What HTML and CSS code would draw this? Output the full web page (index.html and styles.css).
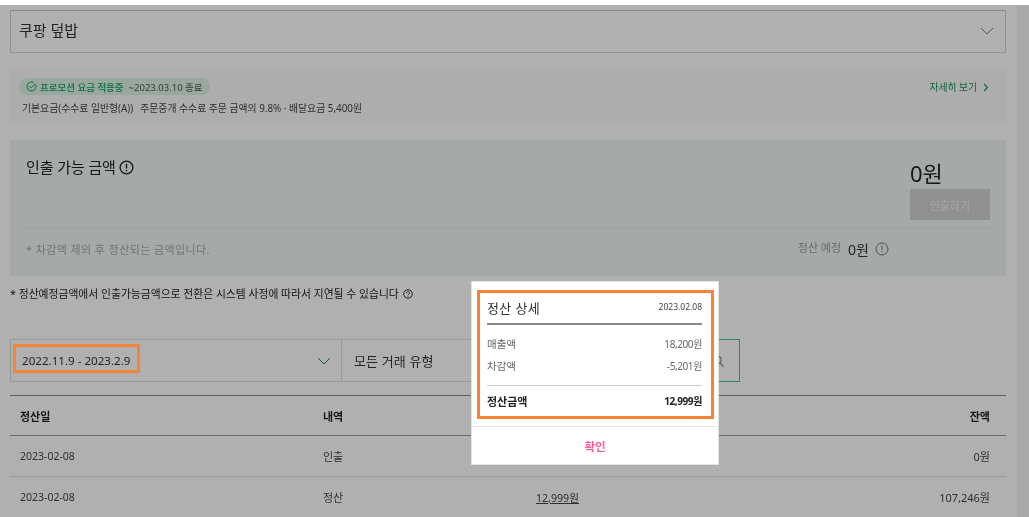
FILE: index.html
```html
<!DOCTYPE html>
<html lang="ko">
<head>
<meta charset="utf-8">
<title>정산 상세</title>
<link rel="stylesheet" href="styles.css">
</head>
<body>
<div class="strip"></div>
<div class="page">
  <main class="main">
    <div class="store"><span>쿠팡 덮밥</span>
      <svg class="chev" width="14" height="8" viewBox="0 0 14 8"><path d="M1 1l6 6 6-6" fill="none" stroke="#6f7f78" stroke-width="1"/></svg>
    </div>
    <section class="promo">
      <div class="promo-text">
        <div class="pill">
          <svg width="11" height="11" viewBox="0 0 11 11"><path d="M9.6 3.6A4.5 4.5 0 1 1 7.6 1.5" fill="none" stroke="#14a35c" stroke-width="1"/><path d="M3.4 5.2l1.8 1.8 4-4.2" fill="none" stroke="#14a35c" stroke-width="1"/></svg>
          <b>프로모션 요금 적용중</b><span>~2023.03.10 종료</span>
        </div>
        <p class="fee"><span class="fee-name">기본요금(수수료 일반형(A))</span>주문중개 수수료 주문 금액의 9.8% · 배달요금 5,400원</p>
      </div>
      <a class="more">자세히 보기
        <svg width="6" height="9" viewBox="0 0 6 9"><path d="M1 1l3.5 3.5L1 8" fill="none" stroke="#1a8f58" stroke-width="1.2"/></svg>
      </a>
    </section>
    <section class="panel">
      <div class="panel-top">
        <h2 class="panel-title">인출 가능 금액
          <svg width="15" height="15" viewBox="0 0 15 15"><circle cx="7.5" cy="7.5" r="6.4" fill="none" stroke="#222" stroke-width="1.3"/><path d="M7.5 3.8v4.6M7.5 9.9v1.4" stroke="#222" stroke-width="1.4"/></svg>
        </h2>
        <div class="balance">
          <div class="amount">0원</div>
          <button class="withdraw">인출하기</button>
        </div>
      </div>
      <div class="panel-bottom">
        <span class="hint">* 차감액 제외 후 정산되는 금액입니다.</span>
        <div class="expected"><span class="exp-label">정산 예정</span><span class="exp-value">0원</span>
          <svg width="14" height="14" viewBox="0 0 14 14"><circle cx="7" cy="7" r="6" fill="none" stroke="#777" stroke-width="1"/><path d="M7 3.6v4.4M7 9.2v1.2" stroke="#777" stroke-width="1"/></svg>
        </div>
      </div>
    </section>
    <p class="notice">* 정산예정금액에서 인출가능금액으로 전환은 시스템 사정에 따라서 지연될 수 있습니다
      <svg width="10" height="10" viewBox="0 0 10 10"><circle cx="5" cy="5" r="4.3" fill="none" stroke="#333" stroke-width="1"/><path d="M3.6 4c0-1.9 2.9-1.9 2.9-.2 0 1-1.5 1.1-1.5 2.2M5 6.9v1" fill="none" stroke="#333" stroke-width=".9"/></svg>
    </p>
    <div class="filters">
      <div class="f-date"><span class="date-text">2022.11.9 - 2023.2.9</span>
        <svg width="14" height="8" viewBox="0 0 14 8"><path d="M1 1l6 6 6-6" fill="none" stroke="#1a8f58" stroke-width="1"/></svg>
      </div>
      <div class="f-type">모든 거래 유형</div>
      <div class="f-search">
        <svg width="14" height="14" viewBox="0 0 14 14"><circle cx="6" cy="6" r="4.2" fill="none" stroke="#888" stroke-width="1.2"/><path d="M9 9l3.5 3.5" stroke="#888" stroke-width="1.2"/></svg>
      </div>
    </div>
    <div class="table">
      <div class="row head"><span>정산일</span><span>내역</span><span class="c-amt"></span><span class="c-bal">잔액</span></div>
      <div class="row"><span class="date">2023-02-08</span><span>인출</span><span class="c-amt"></span><span class="c-bal">0원</span></div>
      <div class="row"><span class="date">2023-02-08</span><span>정산</span><span class="c-amt"><u>12,999원</u></span><span class="c-bal">107,246원</span></div>
    </div>
  </main>
  <div class="scrollbar"></div>
</div>
<div class="overlay"></div>
<div class="date-mark"></div>
<div class="modal">
  <div class="modal-body">
    <div class="m-head"><h3>정산 상세</h3><span>2023.02.08</span></div>
    <div class="m-row first"><span>매출액</span><span class="m-num">18,200원</span></div>
    <div class="m-row"><span>차감액</span><span class="m-num">-5,201원</span></div>
    <div class="m-total"><span>정산금액</span><span class="m-num">12,999원</span></div>
  </div>
  <div class="m-ok">확인</div>
</div>
</body>
</html>
```
FILE: styles.css
```css
* { box-sizing: border-box; }
html, body { margin: 0; height: 517px; overflow: hidden; background: #fff; }
body { font-family: "Noto Sans", "Noto Sans CJK KR", sans-serif; color: #333; position: relative; }
.strip { height: 5px; }
.page { display: flex; height: 512px; }
.main { width: 1017px; padding: 5px 11px 0 10px; filter: blur(.35px); }
.scrollbar { width: 12px; background: #f5f5f5; }

.store { height: 43px; border: 1px solid #d4d8d8; border-top-color: #c8c8c8; display: flex; align-items: center; justify-content: space-between; padding: 0 11px 5px 8px; font-size: 15px; color: #333; }
.chev { margin-top: 4px; }
.promo { margin-top: 15px; height: 56px; background: #fbfbfb; display: flex; justify-content: space-between; padding: 10px 17px 0 9px; }
.pill { display: flex; width: fit-content; align-items: center; gap: 3px; height: 17px; padding: 0 7px; background: #dcf3e6; border-radius: 9px; font-size: 9.5px; color: #555; white-space: nowrap; }
.pill b { color: #12a35c; font-weight: 500; margin-right: 2px; }
.fee { margin: 6px 0 0 3px; font-size: 9.85px; color: #444; line-height: 14px; }
.fee-name { margin-right: 7px; }
.more { font-size: 9.8px; color: #1a8f58; display: flex; gap: 6px; align-items: center; height: 18px; }

.panel { margin-top: 16px; height: 136px; background: #f0f6f3; padding: 0 16px; }
.panel-top { height: 89px; border-bottom: 1px solid #f1e7e7; display: flex; justify-content: space-between; }
.panel-title { margin: 17px 0 0; font-size: 15px; font-weight: 400; color: #222; line-height: 20px; display: flex; align-items: center; gap: 3px; height: 20px; letter-spacing: -.1px; }
.balance { display: flex; flex-direction: column; align-items: flex-start; width: 80px; padding-top: 18px; }
.amount { font-size: 22px; line-height: 31px; color: #222; }
.withdraw { width: 80px; height: 31px; border: 0; background: #d1d1d1; color: #f2f2f2; font: inherit; font-size: 11px; padding: 0; }
.panel-bottom { display: flex; justify-content: space-between; align-items: center; height: 46px; padding: 0 101px 6px 0; }
.hint { font-size: 11px; color: #a6a6a6; letter-spacing: .4px; }
.expected { display: flex; align-items: center; gap: 6px; }
.exp-label { font-size: 11px; color: #999; margin: -4px 1px 0 0; }
.exp-value { font-size: 14px; color: #333; }

.notice { margin: 11px 0 0; font-size: 10.8px; line-height: 14px; color: #222; display: flex; align-items: center; gap: 4px; }

.filters { margin-top: 38px; width: 730px; height: 43px; display: flex; border: 1px solid #dcdcdc; }
.f-date { width: 331px; display: flex; justify-content: space-between; align-items: center; padding: 0 10px 0 11px; border-right: 1px solid #dcdcdc; }
.date-text { font-size: 11.6px; color: #333; white-space: nowrap; }
.f-type { flex: 1; display: flex; align-items: center; padding-left: 12px; font-size: 13px; letter-spacing: .15px; }
.f-search { width: 68px; margin: -1px; border: 1px solid #4fbf8e; display: flex; align-items: center; justify-content: flex-end; padding-right: 14px; }

.table { margin-top: 13px; border-top: 1px solid #888; }
.row { display: grid; grid-template-columns: 303px 213px 1fr auto; height: 41px; align-items: center; padding: 0 16px 0 10px; border-bottom: 1px solid #ddd; font-size: 11px; color: #444; }
.row.head { font-weight: 700; color: #222; border-bottom-color: #999; height: 40px; }
.date { font-size: 10.5px; }
.c-amt { font-size: 10.6px; }
.c-bal { text-align: right; }

.overlay { position: absolute; left: 0; right: 0; top: 5px; bottom: 0; background: rgba(0, 0, 0, .31); }
.date-mark { position: absolute; left: 13px; top: 344px; width: 127px; height: 29px; border: 3px solid #f5843a; }
.modal { position: absolute; left: 471px; top: 281px; width: 248px; height: 184px; background: #fff; border: 1px solid #e2e2e2; padding: 8px 4px 0 5px; display: flex; flex-direction: column; filter: blur(.3px); }
.modal-body { width: 237px; height: 129px; border: 3px solid #f5843a; padding: 0 9px 0 7px; }
.m-head { height: 32px; display: flex; justify-content: space-between; align-items: center; border-bottom: 2px solid #8a8a8a; padding-bottom: 1px; }
.m-head h3 { margin: 0; font-size: 13px; font-weight: 400; color: #333; letter-spacing: .4px; }
.m-head span { font-size: 8.5px; color: #444; margin-top: -3px; }
.m-row { height: 22px; display: flex; justify-content: space-between; align-items: center; font-size: 10.5px; color: #666; }
.m-num { font-size: 10px; letter-spacing: -.4px; }
.m-row.first { margin-top: 7px; }
.m-total { margin-top: 9px; height: 31px; border-top: 1px solid #ccc; display: flex; justify-content: space-between; align-items: center; font-size: 11px; font-weight: 700; color: #222; padding-bottom: 1px; }
.m-ok { margin: 7px -4px 0 -5px; border-top: 1px solid #e4e4e4; flex: 1; display: flex; align-items: center; justify-content: center; font-size: 11.5px; font-weight: 700; color: #ff5c8d; }
```
